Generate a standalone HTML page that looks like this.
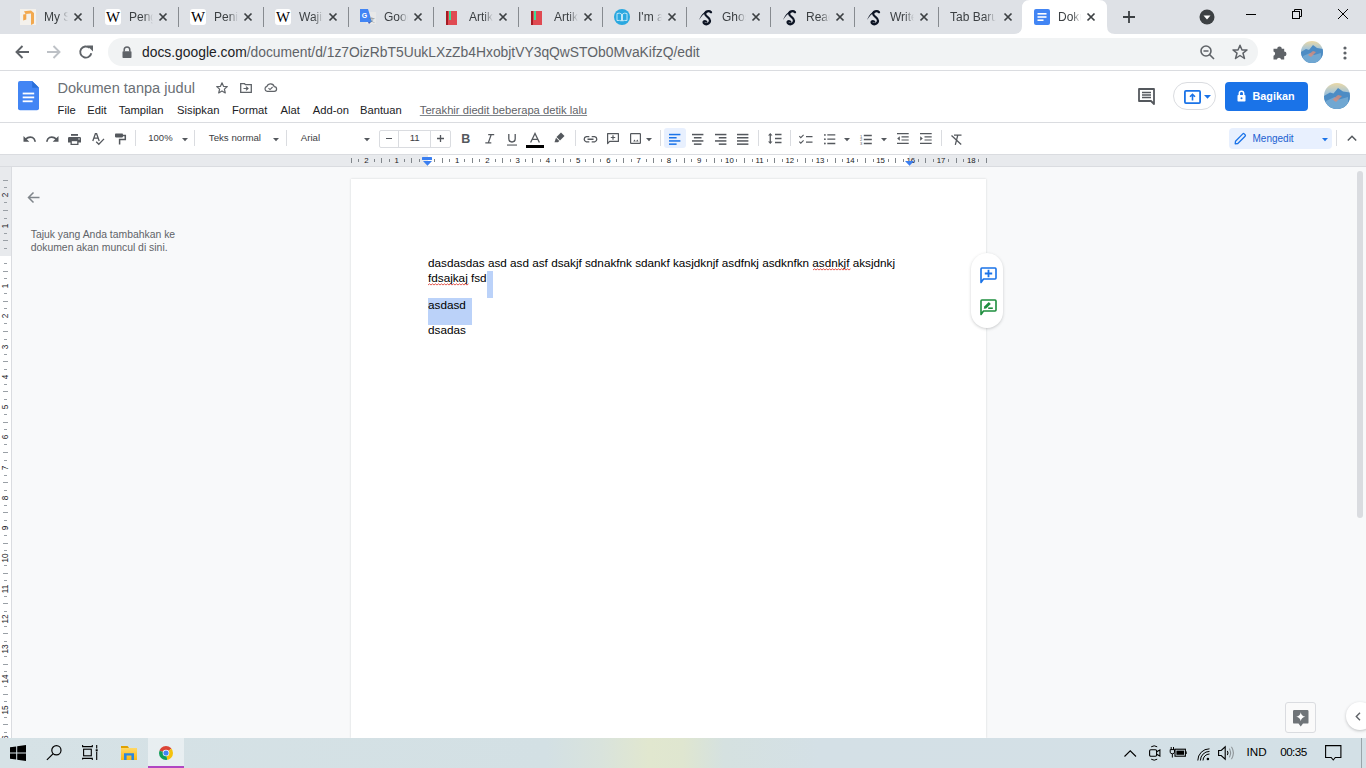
<!DOCTYPE html><html><head><meta charset="utf-8"><style>
*{margin:0;padding:0;box-sizing:border-box}
html,body{width:1366px;height:768px;overflow:hidden;background:#fff;font-family:"Liberation Sans",sans-serif}
.abs{position:absolute}
svg{position:absolute;overflow:visible}
.tt{position:absolute;top:10px;height:16px;font-size:12px;line-height:14px;color:#3c4043;white-space:nowrap;overflow:hidden;-webkit-mask-image:linear-gradient(90deg,#000 62%,transparent 100%)}
.sep{position:absolute;top:7px;width:1px;height:20px;background:#878b90}
.mi{position:absolute;top:103.9px;font-size:11.2px;color:#202124;white-space:nowrap}
.tb{position:absolute;top:132px;font-size:11px;color:#3c4043;white-space:nowrap}
.tsep{position:absolute;top:130px;width:1px;height:16px;background:#dadce0}
.rn{position:absolute;top:155px;font-size:9px;line-height:10px;color:#3c4043}
</style></head><body>
<div class="abs" style="left:0;top:0;width:1366px;height:34px;background:#dee1e6"></div>
<svg style="left:20px;top:9px" width="16" height="16"><rect x="0" y="0" width="16" height="16" fill="#f4f1ec"/><path d="M4 2.2L11 1.5L14 4V14.5L11 16V4.5L5.5 5Z" fill="#f2a950"/><path d="M3.2 5.5L6.3 5V10.5L3.2 11.5Z" fill="#f2a54a"/></svg>
<div class="tt" style="left:44px;width:24px">My S</div>
<svg style="left:74px;top:13px" width="8" height="8"><path d="M0.5 0.5L7.5 7.5M7.5 0.5L0.5 7.5" stroke="#3c4043" stroke-width="1.7"/></svg>
<div class="sep" style="left:93px"></div>
<svg style="left:105px;top:9px" width="16" height="16"><rect x="0" y="0" width="16" height="16" rx="3" fill="#fff"/><text x="8" y="12.5" font-family="Liberation Serif" font-size="14" text-anchor="middle" fill="#000" textLength="14" lengthAdjust="spacingAndGlyphs">W</text></svg>
<div class="tt" style="left:129px;width:24px">Penge</div>
<svg style="left:159px;top:13px" width="8" height="8"><path d="M0.5 0.5L7.5 7.5M7.5 0.5L0.5 7.5" stroke="#3c4043" stroke-width="1.7"/></svg>
<div class="sep" style="left:178px"></div>
<svg style="left:190px;top:9px" width="16" height="16"><rect x="0" y="0" width="16" height="16" rx="3" fill="#fff"/><text x="8" y="12.5" font-family="Liberation Serif" font-size="14" text-anchor="middle" fill="#000" textLength="14" lengthAdjust="spacingAndGlyphs">W</text></svg>
<div class="tt" style="left:214px;width:24px">Penil</div>
<svg style="left:244px;top:13px" width="8" height="8"><path d="M0.5 0.5L7.5 7.5M7.5 0.5L0.5 7.5" stroke="#3c4043" stroke-width="1.7"/></svg>
<div class="sep" style="left:263px"></div>
<svg style="left:275px;top:9px" width="16" height="16"><rect x="0" y="0" width="16" height="16" rx="3" fill="#fff"/><text x="8" y="12.5" font-family="Liberation Serif" font-size="14" text-anchor="middle" fill="#000" textLength="14" lengthAdjust="spacingAndGlyphs">W</text></svg>
<div class="tt" style="left:299px;width:24px">Wajib</div>
<svg style="left:329px;top:13px" width="8" height="8"><path d="M0.5 0.5L7.5 7.5M7.5 0.5L0.5 7.5" stroke="#3c4043" stroke-width="1.7"/></svg>
<div class="sep" style="left:348px"></div>
<svg style="left:360px;top:9px" width="16" height="16"><rect x="6" y="3" width="10" height="12" fill="#e8e8e8"/><path d="M0 0H8L12 13H0Z" fill="#4285f4"/><path d="M8 13L11 13L9 15Z" fill="#3a56c4"/><text x="4.5" y="9" font-family="Liberation Sans" font-weight="bold" font-size="7" text-anchor="middle" fill="#fff">G</text><text x="12" y="13" font-family="Liberation Sans" font-size="6" text-anchor="middle" fill="#888">文</text></svg>
<div class="tt" style="left:384px;width:24px">Goog</div>
<svg style="left:414px;top:13px" width="8" height="8"><path d="M0.5 0.5L7.5 7.5M7.5 0.5L0.5 7.5" stroke="#3c4043" stroke-width="1.7"/></svg>
<div class="sep" style="left:433px"></div>
<svg style="left:445px;top:9px" width="16" height="16"><rect x="1" y="2" width="11" height="14" fill="#e04a52"/><rect x="1" y="2" width="2" height="14" fill="#a51c24"/><rect x="4" y="2" width="2" height="9" fill="#3ddc97"/></svg>
<div class="tt" style="left:469px;width:24px">Artike</div>
<svg style="left:499px;top:13px" width="8" height="8"><path d="M0.5 0.5L7.5 7.5M7.5 0.5L0.5 7.5" stroke="#3c4043" stroke-width="1.7"/></svg>
<div class="sep" style="left:518px"></div>
<svg style="left:530px;top:9px" width="16" height="16"><rect x="1" y="2" width="11" height="14" fill="#e04a52"/><rect x="1" y="2" width="2" height="14" fill="#a51c24"/><rect x="4" y="2" width="2" height="9" fill="#3ddc97"/></svg>
<div class="tt" style="left:554px;width:24px">Artike</div>
<svg style="left:584px;top:13px" width="8" height="8"><path d="M0.5 0.5L7.5 7.5M7.5 0.5L0.5 7.5" stroke="#3c4043" stroke-width="1.7"/></svg>
<div class="sep" style="left:602px"></div>
<svg style="left:614px;top:9px" width="16" height="16"><circle cx="8" cy="8" r="8" fill="#2aa8e0"/><path d="M3 4.5Q5.5 3.5 7.5 5V12Q5.5 11 3 11.5Z M13 4.5Q10.5 3.5 8.5 5V12Q10.5 11 13 11.5Z" fill="none" stroke="#bfe6f7" stroke-width="1"/></svg>
<div class="tt" style="left:638px;width:24px">I'm a</div>
<svg style="left:668px;top:13px" width="8" height="8"><path d="M0.5 0.5L7.5 7.5M7.5 0.5L0.5 7.5" stroke="#3c4043" stroke-width="1.7"/></svg>
<div class="sep" style="left:686px"></div>
<svg style="left:698px;top:9px" width="16" height="16"><path d="M13 3.2C11 1.2 7 2.2 7.2 5C7.4 7.8 12.2 8.2 12 11.8C11.8 15 7.8 16.2 6 14.2C4.8 12.6 6.4 11.4 8.2 12.6" fill="none" stroke="#0d1424" stroke-width="2.3" stroke-linecap="round"/><path d="M1 11C3 6 6 2.5 10 1.8C12 1.5 13.8 1.8 13.6 3.6C12.5 2.6 10.5 2.6 8.5 3.4C5.5 4.8 3 7.5 1 11Z" fill="#0d1424"/></svg>
<div class="tt" style="left:722px;width:24px">Ghos</div>
<svg style="left:752px;top:13px" width="8" height="8"><path d="M0.5 0.5L7.5 7.5M7.5 0.5L0.5 7.5" stroke="#3c4043" stroke-width="1.7"/></svg>
<div class="sep" style="left:770px"></div>
<svg style="left:782px;top:9px" width="16" height="16"><path d="M13 3.2C11 1.2 7 2.2 7.2 5C7.4 7.8 12.2 8.2 12 11.8C11.8 15 7.8 16.2 6 14.2C4.8 12.6 6.4 11.4 8.2 12.6" fill="none" stroke="#0d1424" stroke-width="2.3" stroke-linecap="round"/><path d="M1 11C3 6 6 2.5 10 1.8C12 1.5 13.8 1.8 13.6 3.6C12.5 2.6 10.5 2.6 8.5 3.4C5.5 4.8 3 7.5 1 11Z" fill="#0d1424"/></svg>
<div class="tt" style="left:806px;width:24px">Read</div>
<svg style="left:836px;top:13px" width="8" height="8"><path d="M0.5 0.5L7.5 7.5M7.5 0.5L0.5 7.5" stroke="#3c4043" stroke-width="1.7"/></svg>
<div class="sep" style="left:854px"></div>
<svg style="left:866px;top:9px" width="16" height="16"><path d="M13 3.2C11 1.2 7 2.2 7.2 5C7.4 7.8 12.2 8.2 12 11.8C11.8 15 7.8 16.2 6 14.2C4.8 12.6 6.4 11.4 8.2 12.6" fill="none" stroke="#0d1424" stroke-width="2.3" stroke-linecap="round"/><path d="M1 11C3 6 6 2.5 10 1.8C12 1.5 13.8 1.8 13.6 3.6C12.5 2.6 10.5 2.6 8.5 3.4C5.5 4.8 3 7.5 1 11Z" fill="#0d1424"/></svg>
<div class="tt" style="left:890px;width:24px">Write</div>
<svg style="left:920px;top:13px" width="8" height="8"><path d="M0.5 0.5L7.5 7.5M7.5 0.5L0.5 7.5" stroke="#3c4043" stroke-width="1.7"/></svg>
<div class="sep" style="left:938px"></div>
<div class="tt" style="left:950px;width:46px;-webkit-mask-image:linear-gradient(90deg,#000 75%,transparent 100%)">Tab Baru</div>
<svg style="left:1004px;top:13px" width="8" height="8"><path d="M0.5 0.5L7.5 7.5M7.5 0.5L0.5 7.5" stroke="#3c4043" stroke-width="1.7"/></svg>
<svg style="left:1014px;top:0" width="101" height="34"><path d="M0 34Q8 34 8 26V8Q8 0 16 0H85Q93 0 93 8V26Q93 34 101 34Z" fill="#fff"/></svg>
<svg style="left:1034px;top:9px" width="16" height="16"><rect x="0" y="0" width="16" height="16" rx="2" fill="#4285f4"/><rect x="3.5" y="4" width="9" height="1.6" fill="#fff"/><rect x="3.5" y="7.2" width="9" height="1.6" fill="#fff"/><rect x="3.5" y="10.4" width="6" height="1.6" fill="#fff"/></svg>
<div class="tt" style="left:1058px;width:23px">Dokumen</div>
<svg style="left:1087px;top:13px" width="8" height="8"><path d="M0.5 0.5L7.5 7.5M7.5 0.5L0.5 7.5" stroke="#3c4043" stroke-width="1.7"/></svg>
<svg style="left:1123px;top:11px" width="12" height="12"><path d="M6 0V12M0 6H12" stroke="#3c4043" stroke-width="1.8"/></svg>
<svg style="left:1199px;top:9px" width="16" height="16"><circle cx="8" cy="8" r="7.5" fill="#3c4043"/><path d="M4.5 6.5H11.5L8 10.5Z" fill="#fff"/></svg>
<div class="abs" style="left:1246px;top:14px;width:10px;height:1px;background:#000"></div>
<svg style="left:1292px;top:9px" width="10" height="10"><rect x="0.5" y="2.5" width="7" height="7" fill="none" stroke="#000" stroke-width="1"/><path d="M2.5 2.5V0.5H9.5V7.5H7.5" fill="none" stroke="#000" stroke-width="1"/></svg>
<svg style="left:1338px;top:9px" width="10" height="10"><path d="M0 0L10 10M10 0L0 10" stroke="#000" stroke-width="1"/></svg>
<div class="abs" style="left:0;top:34px;width:1366px;height:36px;background:#fff"></div>
<div class="abs" style="left:0;top:70px;width:1366px;height:1px;background:#dadce0"></div>
<div class="abs" style="left:108px;top:38px;width:1150px;height:28px;border-radius:14px;background:#f1f3f4"></div>
<svg style="left:14px;top:44px" width="16" height="16"><path d="M15 8H2.5M8.5 2L2.5 8L8.5 14" fill="none" stroke="#5f6368" stroke-width="1.9"/></svg>
<svg style="left:46px;top:44px" width="16" height="16"><path d="M1 8H13.5M7.5 2L13.5 8L7.5 14" fill="none" stroke="#bdc1c6" stroke-width="1.9"/></svg>
<svg style="left:78px;top:44px" width="16" height="16"><path d="M13.3 9.2A5.6 5.6 0 1 1 11.6 3.9" fill="none" stroke="#5f6368" stroke-width="1.9"/><path d="M9 1.5H15V7.5Z" fill="#5f6368"/></svg>
<svg style="left:121px;top:46px" width="12" height="12"><path d="M3.2 5.5V3.8A2.8 2.8 0 0 1 8.8 3.8V5.5" fill="none" stroke="#5f6368" stroke-width="1.5"/><rect x="1.5" y="5.2" width="9" height="6.8" rx="0.8" fill="#5f6368"/></svg>
<div class="abs" style="left:142px;top:44px;font-size:13.85px;line-height:16px;color:#5f6368;white-space:nowrap"><span style="color:#202124">docs.google.com</span>/document/d/1z7OizRbT5UukLXzZb4HxobjtVY3qQwSTOb0MvaKifzQ/edit</div>
<svg style="left:1200px;top:45px" width="15" height="15"><circle cx="6" cy="6" r="5" fill="none" stroke="#5f6368" stroke-width="1.6"/><path d="M9.5 9.5L14 14M3.5 6H8.5" stroke="#5f6368" stroke-width="1.6"/></svg>
<svg style="left:1232px;top:44px" width="16" height="16"><path d="M8 1.2L10 6H15L11 9.2L12.5 14.5L8 11.5L3.5 14.5L5 9.2L1 6H6Z" fill="none" stroke="#5f6368" stroke-width="1.5" stroke-linejoin="round"/></svg>
<svg style="left:1273px;top:44.5px" width="15" height="15"><path d="M0.5 3.8H4.2A2.3 2.3 0 0 1 8.8 3.8H11.2V6.6A2.3 2.3 0 0 1 11.2 11.2V14.5H8.2A2.3 2.3 0 0 0 3.8 14.5H0.5V10.8A2.3 2.3 0 0 0 0.5 6.4Z" fill="#5f6368"/></svg>
<svg style="left:1301px;top:41px" width="22" height="22"><defs><linearGradient id="av1" x1="0" y1="0" x2="0" y2="1"><stop offset="0" stop-color="#ecd9a6"/><stop offset="0.35" stop-color="#a9c6d6"/><stop offset="1" stop-color="#4f88b8"/></linearGradient><clipPath id="avc1"><circle cx="11" cy="11" r="11"/></clipPath></defs><g clip-path="url(#avc1)"><rect width="22" height="22" fill="url(#av1)"/><path d="M0 11L5 8L8 9L12 4L16 7L22 8V22H0Z" fill="#4d8cc4"/><path d="M2 15L9 12L13 14L20 12V22H2Z" fill="#7fb2d9" opacity="0.7"/><path d="M7 14L12 10L15 11L10 16Z" fill="#d88c7a" opacity="0.8"/></g></svg>
<svg style="left:1342.5px;top:45.5px" width="4" height="14"><circle cx="2" cy="2" r="1.6" fill="#5f6368"/><circle cx="2" cy="7" r="1.6" fill="#5f6368"/><circle cx="2" cy="12" r="1.6" fill="#5f6368"/></svg>
<svg style="left:18.3px;top:81.3px" width="21" height="29.3"><path d="M2 0H14.2L21 6.8V27.3A2 2 0 0 1 19 29.3H2A2 2 0 0 1 0 27.3V2A2 2 0 0 1 2 0Z" fill="#4285f4"/><path d="M14.2 0V6.8H21Z" fill="#2a6fd9"/><rect x="4.7" y="11.6" width="11.5" height="1.8" fill="#fff"/><rect x="4.7" y="15.5" width="11.5" height="1.8" fill="#fff"/><rect x="4.7" y="19.4" width="9.9" height="1.8" fill="#fff"/></svg>
<div class="abs" style="left:57.5px;top:79px;font-size:14.55px;line-height:18px;color:#6b7075;white-space:nowrap">Dokumen tanpa judul</div>
<svg style="left:216px;top:81.5px" width="12" height="12"><path d="M6 0.8L7.5 4.3L11.3 4.6L8.4 7.1L9.3 10.9L6 8.9L2.7 10.9L3.6 7.1L0.7 4.6L4.5 4.3Z" fill="none" stroke="#5f6368" stroke-width="1.2" stroke-linejoin="round"/></svg>
<svg style="left:240px;top:83px" width="12" height="10"><path d="M0.7 0.7H4.5L5.5 1.7H11.3V9.3H0.7Z" fill="none" stroke="#5f6368" stroke-width="1.3"/><path d="M3.5 5.5H7.8M6 3.6L8 5.5L6 7.4" fill="none" stroke="#5f6368" stroke-width="1.2"/></svg>
<svg style="left:264px;top:83px" width="13" height="9"><path d="M3.2 8.4A2.6 2.6 0 0 1 3 3.3A3.8 3.8 0 0 1 10.2 3.6A2.4 2.4 0 0 1 10.2 8.4Z" fill="none" stroke="#5f6368" stroke-width="1.2"/><path d="M4.5 5.2L6 6.6L8.6 4" fill="none" stroke="#5f6368" stroke-width="1.1"/></svg>
<div class="mi" style="left:57.6px">File</div>
<div class="mi" style="left:87.3px">Edit</div>
<div class="mi" style="left:118.7px">Tampilan</div>
<div class="mi" style="left:177.1px">Sisipkan</div>
<div class="mi" style="left:232px">Format</div>
<div class="mi" style="left:280.6px">Alat</div>
<div class="mi" style="left:312.8px">Add-on</div>
<div class="mi" style="left:360px">Bantuan</div>
<div class="mi" style="left:419.8px;color:#5f6368;text-decoration:underline;text-decoration-color:#80868b">Terakhir diedit beberapa detik lalu</div>
<svg style="left:1138px;top:88px" width="17" height="16"><path d="M1 1H16V16L13 13H1Z" fill="none" stroke="#54585d" stroke-width="1.8" stroke-linejoin="round"/><path d="M4 4.5H13M4 7H13M4 9.5H13" stroke="#54585d" stroke-width="1.4"/></svg>
<div class="abs" style="left:1173px;top:82px;width:43px;height:28px;border:1px solid #dadce0;border-radius:14px;background:#fff"></div>
<svg style="left:1184px;top:89.5px" width="17" height="14"><rect x="0.9" y="0.9" width="15.2" height="12.2" rx="1" fill="none" stroke="#1a73e8" stroke-width="1.8"/><path d="M8.5 10.5V4.5M6 6.8L8.5 4.3L11 6.8" fill="none" stroke="#1a73e8" stroke-width="1.6"/></svg>
<svg style="left:1204px;top:95px" width="7" height="4"><path d="M0 0H7L3.5 3.8Z" fill="#1a73e8"/></svg>
<div class="abs" style="left:1225px;top:82px;width:83px;height:29px;border-radius:4px;background:#1a73e8"></div>
<svg style="left:1237px;top:90px" width="9" height="12"><path d="M2.3 5V3.5A2.2 2.2 0 0 1 6.7 3.5V5" fill="none" stroke="#fff" stroke-width="1.5"/><rect x="0.5" y="5" width="8" height="6.5" rx="0.7" fill="#fff"/><circle cx="4.5" cy="8.2" r="1" fill="#1a73e8"/></svg>
<div class="abs" style="left:1252.5px;top:89px;font-size:10.8px;line-height:14px;font-weight:bold;color:#fff;white-space:nowrap">Bagikan</div>
<svg style="left:1324px;top:83px" width="26" height="26"><defs><linearGradient id="av2" x1="0" y1="0" x2="0" y2="1"><stop offset="0" stop-color="#ecd9a6"/><stop offset="0.35" stop-color="#a9c6d6"/><stop offset="1" stop-color="#4f88b8"/></linearGradient><clipPath id="avc2"><circle cx="13" cy="13" r="13"/></clipPath></defs><g clip-path="url(#avc2)"><rect width="26" height="26" fill="url(#av2)"/><path d="M0 13L6 9.5L9.5 10.5L14 5L19 8.5L26 9.5V26H0Z" fill="#4d8cc4"/><path d="M2 18L10.5 14L15 16.5L24 14V26H2Z" fill="#7fb2d9" opacity="0.7"/><path d="M8.5 16.5L14 12L18 13L12 19Z" fill="#d88c7a" opacity="0.8"/></g></svg>
<svg style="left:22.5px;top:135px" width="13" height="8"><path d="M2.5 4.2Q6 1.2 9.5 2.6Q11.5 3.5 12.3 6.8" fill="none" stroke="#54585d" stroke-width="1.6"/><path d="M0.5 1V6.8H6.3Z" fill="#54585d"/></svg>
<svg style="left:46px;top:135px" width="13" height="8"><path d="M10.5 4.2Q7 1.2 3.5 2.6Q1.5 3.5 0.7 6.8" fill="none" stroke="#54585d" stroke-width="1.6"/><path d="M12.5 1V6.8H6.7Z" fill="#54585d"/></svg>
<svg style="left:68px;top:134px" width="13" height="11"><rect x="3" y="0" width="7" height="1.8" fill="#54585d"/><path d="M1.2 3H11.8A1.2 1.2 0 0 1 13 4.2V8.5H10.5V11H2.5V8.5H0V4.2A1.2 1.2 0 0 1 1.2 3Z" fill="#54585d"/><rect x="3.8" y="7.2" width="5.4" height="2.6" fill="#fff"/><circle cx="11" cy="5" r="0.7" fill="#fff"/></svg>
<svg style="left:91.5px;top:133px" width="13" height="12"><path d="M0.8 8L3.4 0.7H4.6L7.2 8M2 5.2H6" fill="none" stroke="#54585d" stroke-width="1.3"/><path d="M4.2 8.8L6.8 11.3L12 5.9" fill="none" stroke="#54585d" stroke-width="1.3"/></svg>
<svg style="left:115px;top:133px" width="11" height="12"><rect x="0" y="0.6" width="8" height="3.8" rx="0.8" fill="#54585d"/><path d="M8 2.4H10.3V6.4H4.6V11.5" fill="none" stroke="#54585d" stroke-width="1.5"/></svg>
<div class="tsep" style="left:135px"></div>
<div class="tsep" style="left:194px"></div>
<div class="tsep" style="left:286px"></div>
<div class="tsep" style="left:575px"></div>
<div class="tsep" style="left:660px"></div>
<div class="tsep" style="left:758px"></div>
<div class="tsep" style="left:790px"></div>
<div class="tsep" style="left:941px"></div>
<div class="tsep" style="left:1336px"></div>
<div class="tb" style="left:148.3px;top:131.5px;font-size:9.5px">100%</div>
<svg style="left:181.7px;top:137.5px" width="6" height="3.5"><path d="M0 0H6L3 3.3Z" fill="#54585d"/></svg>
<svg style="left:272.8px;top:137.5px" width="6" height="3.5"><path d="M0 0H6L3 3.3Z" fill="#54585d"/></svg>
<svg style="left:364.4px;top:137.5px" width="6" height="3.5"><path d="M0 0H6L3 3.3Z" fill="#54585d"/></svg>
<div class="tb" style="left:208.8px;top:131.5px;font-size:9.7px">Teks normal</div>
<div class="tb" style="left:300.7px;top:131.5px;font-size:9.7px">Arial</div>
<div class="abs" style="left:379px;top:129.5px;width:72px;height:18px;border:1px solid #dadce0;border-radius:2px"></div>
<div class="abs" style="left:398px;top:129.5px;width:1px;height:18px;background:#dadce0"></div>
<div class="abs" style="left:430px;top:129.5px;width:1px;height:18px;background:#dadce0"></div>
<div class="abs" style="left:385.5px;top:137.5px;width:6.5px;height:1.3px;background:#54585d"></div>
<div class="tb" style="left:409.7px;top:131.8px;font-size:9.7px">11</div>
<svg style="left:437px;top:135px" width="7" height="7"><path d="M3.5 0V7M0 3.5H7" stroke="#54585d" stroke-width="1.3"/></svg>
<div class="abs" style="left:461.3px;top:131.5px;font-size:12.5px;line-height:14px;font-weight:bold;color:#54585d">B</div>
<svg style="left:484.5px;top:134px" width="9.5" height="9.5"><path d="M3.2 0.6H9.2M0.3 8.9H6.3M6.2 0.6L3.3 8.9" fill="none" stroke="#54585d" stroke-width="1.3"/></svg>
<svg style="left:506.5px;top:134px" width="10" height="12"><path d="M1.8 0V4.8A3.2 3.2 0 0 0 8.2 4.8V0" fill="none" stroke="#54585d" stroke-width="1.3"/><rect x="0" y="10.5" width="10" height="1.1" fill="#54585d"/></svg>
<svg style="left:530px;top:133.3px" width="10" height="10"><path d="M0.6 9.5L5 0.5L9.4 9.5M2.2 6.4H7.8" fill="none" stroke="#54585d" stroke-width="1.3"/></svg>
<div class="abs" style="left:526px;top:145px;width:18px;height:3px;background:#000"></div>
<svg style="left:554px;top:132px" width="11" height="10.5"><path d="M7 0.5L10.5 4L6 8.5L2.5 5Z" fill="#54585d"/><path d="M2 5.7L5.3 9L4 10.3H0.5Z" fill="#54585d"/></svg>
<svg style="left:583px;top:135.7px" width="15" height="6.5"><path d="M6.3 0.7H3.3A2.6 2.6 0 0 0 3.3 5.8H6.3M8.7 0.7H11.7A2.6 2.6 0 0 1 11.7 5.8H8.7M4.5 3.25H10.5" fill="none" stroke="#54585d" stroke-width="1.3"/></svg>
<svg style="left:607px;top:133px" width="12" height="11"><path d="M0.6 10.5V0.6H11.4V8.4H2.6Z" fill="none" stroke="#54585d" stroke-width="1.2" stroke-linejoin="round"/><path d="M6 2.3V6.7M3.8 4.5H8.2" stroke="#54585d" stroke-width="1.2"/></svg>
<svg style="left:630px;top:133px" width="11" height="11"><rect x="0.6" y="0.6" width="9.8" height="9.8" rx="0.6" fill="none" stroke="#54585d" stroke-width="1.2"/><path d="M3.2 8.4L4.5 6.5L5.8 8.4ZM6 8.4L7.3 6.5L8.6 8.4Z" fill="#54585d"/></svg>
<svg style="left:646px;top:137.8px" width="6" height="3.5"><path d="M0 0H6L3 3.3Z" fill="#54585d"/></svg>
<div class="abs" style="left:664px;top:128.3px;width:22px;height:20px;border-radius:3px;background:#e8f0fe"></div>
<svg style="left:669.2px;top:133px" width="12" height="12"><rect x="0" y="0.8000000000000114" width="11.4" height="1.5" fill="#1a73e8"/><rect x="0" y="4" width="7.6" height="1.5" fill="#1a73e8"/><rect x="0" y="7.199999999999989" width="11.4" height="1.5" fill="#1a73e8"/><rect x="0" y="10.400000000000006" width="7.6" height="1.5" fill="#1a73e8"/></svg>
<svg style="left:692.4px;top:133px" width="12" height="12"><rect x="0" y="0.8000000000000114" width="11.4" height="1.5" fill="#54585d"/><rect x="1.9" y="4" width="7.6" height="1.5" fill="#54585d"/><rect x="0" y="7.199999999999989" width="11.4" height="1.5" fill="#54585d"/><rect x="1.9" y="10.400000000000006" width="7.6" height="1.5" fill="#54585d"/></svg>
<svg style="left:715.3px;top:133px" width="12" height="12"><rect x="0" y="0.8000000000000114" width="11.4" height="1.5" fill="#54585d"/><rect x="3.8" y="4" width="7.6" height="1.5" fill="#54585d"/><rect x="0" y="7.199999999999989" width="11.4" height="1.5" fill="#54585d"/><rect x="3.8" y="10.400000000000006" width="7.6" height="1.5" fill="#54585d"/></svg>
<svg style="left:737.3px;top:133px" width="12" height="12"><rect x="0" y="0.8000000000000114" width="11.4" height="1.5" fill="#54585d"/><rect x="0" y="4" width="11.4" height="1.5" fill="#54585d"/><rect x="0" y="7.199999999999989" width="11.4" height="1.5" fill="#54585d"/><rect x="0" y="10.400000000000006" width="11.4" height="1.5" fill="#54585d"/></svg>
<svg style="left:767.5px;top:133px" width="14" height="11"><path d="M2.25 1.8V9.2" stroke="#54585d" stroke-width="1.3"/><path d="M0 2.6L2.25 0L4.5 2.6ZM0 8.4L2.25 11L4.5 8.4Z" fill="#54585d"/><path d="M7 1.5H13.5M7 5.5H13.5M7 9.5H13.5" stroke="#54585d" stroke-width="1.3"/></svg>
<svg style="left:798.5px;top:133.5px" width="14" height="11"><path d="M0.3 2.2L1.8 3.7L4.6 0.9M0.3 7.7L1.8 9.2L4.6 6.4" fill="none" stroke="#54585d" stroke-width="1.1"/><path d="M7 2.6H13.5M7 8.1H13.5" stroke="#54585d" stroke-width="1.3"/></svg>
<svg style="left:823.5px;top:134px" width="11.5" height="10.5"><circle cx="0.9" cy="0.9" r="0.9" fill="#54585d"/><circle cx="0.9" cy="5.2" r="0.9" fill="#54585d"/><circle cx="0.9" cy="9.5" r="0.9" fill="#54585d"/><path d="M3.3 0.9H11.3M3.3 5.2H11.3M3.3 9.5H11.3" stroke="#54585d" stroke-width="1.3"/></svg>
<svg style="left:844px;top:137.5px" width="6" height="3.5"><path d="M0 0H6L3 3.3Z" fill="#54585d"/></svg>
<svg style="left:860px;top:133.5px" width="12" height="11"><text x="0" y="3.6" font-size="4" font-family="Liberation Sans" fill="#54585d">1</text><text x="0" y="7.3" font-size="4" font-family="Liberation Sans" fill="#54585d">2</text><text x="0" y="11" font-size="4" font-family="Liberation Sans" fill="#54585d">3</text><path d="M3.8 1.5H11.8M3.8 5.5H11.8M3.8 9.5H11.8" stroke="#54585d" stroke-width="1.3"/></svg>
<svg style="left:881.2px;top:137.5px" width="6" height="3.5"><path d="M0 0H6L3 3.3Z" fill="#54585d"/></svg>
<svg style="left:897px;top:133.3px" width="12" height="11"><path d="M0 0.6H11.7M4.5 3.9H11.7M4.5 7H11.7M0 10.3H11.7" stroke="#54585d" stroke-width="1.2"/><path d="M2.8 3.2V7.8L0.2 5.5Z" fill="#54585d"/></svg>
<svg style="left:920px;top:133.3px" width="12" height="11"><path d="M0 0.6H11.7M4.5 3.9H11.7M4.5 7H11.7M0 10.3H11.7" stroke="#54585d" stroke-width="1.2"/><path d="M0.2 3.2V7.8L2.8 5.5Z" fill="#54585d"/></svg>
<svg style="left:951px;top:134px" width="11" height="11"><path d="M3 1.2H10.5M6.8 1.2L4.3 10.8M0.5 1.5L10.2 10.5" fill="none" stroke="#54585d" stroke-width="1.3"/></svg>
<div class="abs" style="left:1229px;top:128.3px;width:103px;height:20.5px;border-radius:4px;background:#e8f0fe"></div>
<svg style="left:1234px;top:132.5px" width="12" height="12"><path d="M1.2 10.8L1.5 8.2L8.8 0.9A1 1 0 0 1 10.2 0.9L11.1 1.8A1 1 0 0 1 11.1 3.2L3.8 10.5Z" fill="none" stroke="#1a73e8" stroke-width="1.3" stroke-linejoin="round"/></svg>
<div class="abs" style="left:1252.5px;top:132.5px;font-size:10px;line-height:12px;color:#1a5fd1;white-space:nowrap">Mengedit</div>
<svg style="left:1322px;top:137.5px" width="6" height="3.5"><path d="M0 0H6L3 3.3Z" fill="#1a73e8"/></svg>
<svg style="left:1347px;top:135px" width="10" height="6"><path d="M0.8 5.5L5 1.3L9.2 5.5" fill="none" stroke="#54585d" stroke-width="1.5"/></svg>
<div class="abs" style="left:0;top:122px;width:1366px;height:1px;background:#dadce0"></div>
<div class="abs" style="left:0;top:154px;width:1366px;height:1px;background:#dadce0"></div>
<div class="abs" style="left:0;top:155px;width:1366px;height:11px;background:#e8eaed"></div>
<div class="abs" style="left:427.6px;top:155px;width:481.5px;height:11px;background:#fff"></div>
<div class="abs" style="left:0;top:166px;width:1366px;height:1px;background:#dadce0"></div>
<div class="abs" style="left:350.90px;top:158.2px;width:1px;height:4.6px;background:#80868b"></div>
<div class="abs" style="left:358.46px;top:159px;width:1px;height:3px;background:#80868b"></div>
<div class="abs" style="left:356.52px;top:155.5px;width:20px;text-align:center;font-size:7.8px;line-height:10px;color:#202124">2</div>
<div class="abs" style="left:373.58px;top:159px;width:1px;height:3px;background:#80868b"></div>
<div class="abs" style="left:381.14px;top:158.2px;width:1px;height:4.6px;background:#80868b"></div>
<div class="abs" style="left:388.70px;top:159px;width:1px;height:3px;background:#80868b"></div>
<div class="abs" style="left:386.76px;top:155.5px;width:20px;text-align:center;font-size:7.8px;line-height:10px;color:#202124">1</div>
<div class="abs" style="left:403.82px;top:159px;width:1px;height:3px;background:#80868b"></div>
<div class="abs" style="left:411.38px;top:158.2px;width:1px;height:4.6px;background:#80868b"></div>
<div class="abs" style="left:418.94px;top:159px;width:1px;height:3px;background:#80868b"></div>
<div class="abs" style="left:434.06px;top:159px;width:1px;height:3px;background:#80868b"></div>
<div class="abs" style="left:441.62px;top:158.2px;width:1px;height:4.6px;background:#80868b"></div>
<div class="abs" style="left:449.18px;top:159px;width:1px;height:3px;background:#80868b"></div>
<div class="abs" style="left:447.24px;top:155.5px;width:20px;text-align:center;font-size:7.8px;line-height:10px;color:#202124">1</div>
<div class="abs" style="left:464.30px;top:159px;width:1px;height:3px;background:#80868b"></div>
<div class="abs" style="left:471.86px;top:158.2px;width:1px;height:4.6px;background:#80868b"></div>
<div class="abs" style="left:479.42px;top:159px;width:1px;height:3px;background:#80868b"></div>
<div class="abs" style="left:477.48px;top:155.5px;width:20px;text-align:center;font-size:7.8px;line-height:10px;color:#202124">2</div>
<div class="abs" style="left:494.54px;top:159px;width:1px;height:3px;background:#80868b"></div>
<div class="abs" style="left:502.10px;top:158.2px;width:1px;height:4.6px;background:#80868b"></div>
<div class="abs" style="left:509.66px;top:159px;width:1px;height:3px;background:#80868b"></div>
<div class="abs" style="left:507.72px;top:155.5px;width:20px;text-align:center;font-size:7.8px;line-height:10px;color:#202124">3</div>
<div class="abs" style="left:524.78px;top:159px;width:1px;height:3px;background:#80868b"></div>
<div class="abs" style="left:532.34px;top:158.2px;width:1px;height:4.6px;background:#80868b"></div>
<div class="abs" style="left:539.90px;top:159px;width:1px;height:3px;background:#80868b"></div>
<div class="abs" style="left:537.96px;top:155.5px;width:20px;text-align:center;font-size:7.8px;line-height:10px;color:#202124">4</div>
<div class="abs" style="left:555.02px;top:159px;width:1px;height:3px;background:#80868b"></div>
<div class="abs" style="left:562.58px;top:158.2px;width:1px;height:4.6px;background:#80868b"></div>
<div class="abs" style="left:570.14px;top:159px;width:1px;height:3px;background:#80868b"></div>
<div class="abs" style="left:568.20px;top:155.5px;width:20px;text-align:center;font-size:7.8px;line-height:10px;color:#202124">5</div>
<div class="abs" style="left:585.26px;top:159px;width:1px;height:3px;background:#80868b"></div>
<div class="abs" style="left:592.82px;top:158.2px;width:1px;height:4.6px;background:#80868b"></div>
<div class="abs" style="left:600.38px;top:159px;width:1px;height:3px;background:#80868b"></div>
<div class="abs" style="left:598.44px;top:155.5px;width:20px;text-align:center;font-size:7.8px;line-height:10px;color:#202124">6</div>
<div class="abs" style="left:615.50px;top:159px;width:1px;height:3px;background:#80868b"></div>
<div class="abs" style="left:623.06px;top:158.2px;width:1px;height:4.6px;background:#80868b"></div>
<div class="abs" style="left:630.62px;top:159px;width:1px;height:3px;background:#80868b"></div>
<div class="abs" style="left:628.68px;top:155.5px;width:20px;text-align:center;font-size:7.8px;line-height:10px;color:#202124">7</div>
<div class="abs" style="left:645.74px;top:159px;width:1px;height:3px;background:#80868b"></div>
<div class="abs" style="left:653.30px;top:158.2px;width:1px;height:4.6px;background:#80868b"></div>
<div class="abs" style="left:660.86px;top:159px;width:1px;height:3px;background:#80868b"></div>
<div class="abs" style="left:658.92px;top:155.5px;width:20px;text-align:center;font-size:7.8px;line-height:10px;color:#202124">8</div>
<div class="abs" style="left:675.98px;top:159px;width:1px;height:3px;background:#80868b"></div>
<div class="abs" style="left:683.54px;top:158.2px;width:1px;height:4.6px;background:#80868b"></div>
<div class="abs" style="left:691.10px;top:159px;width:1px;height:3px;background:#80868b"></div>
<div class="abs" style="left:689.16px;top:155.5px;width:20px;text-align:center;font-size:7.8px;line-height:10px;color:#202124">9</div>
<div class="abs" style="left:706.22px;top:159px;width:1px;height:3px;background:#80868b"></div>
<div class="abs" style="left:713.78px;top:158.2px;width:1px;height:4.6px;background:#80868b"></div>
<div class="abs" style="left:721.34px;top:159px;width:1px;height:3px;background:#80868b"></div>
<div class="abs" style="left:719.40px;top:155.5px;width:20px;text-align:center;font-size:7.8px;line-height:10px;color:#202124">10</div>
<div class="abs" style="left:736.46px;top:159px;width:1px;height:3px;background:#80868b"></div>
<div class="abs" style="left:744.02px;top:158.2px;width:1px;height:4.6px;background:#80868b"></div>
<div class="abs" style="left:751.58px;top:159px;width:1px;height:3px;background:#80868b"></div>
<div class="abs" style="left:749.64px;top:155.5px;width:20px;text-align:center;font-size:7.8px;line-height:10px;color:#202124">11</div>
<div class="abs" style="left:766.70px;top:159px;width:1px;height:3px;background:#80868b"></div>
<div class="abs" style="left:774.26px;top:158.2px;width:1px;height:4.6px;background:#80868b"></div>
<div class="abs" style="left:781.82px;top:159px;width:1px;height:3px;background:#80868b"></div>
<div class="abs" style="left:779.88px;top:155.5px;width:20px;text-align:center;font-size:7.8px;line-height:10px;color:#202124">12</div>
<div class="abs" style="left:796.94px;top:159px;width:1px;height:3px;background:#80868b"></div>
<div class="abs" style="left:804.50px;top:158.2px;width:1px;height:4.6px;background:#80868b"></div>
<div class="abs" style="left:812.06px;top:159px;width:1px;height:3px;background:#80868b"></div>
<div class="abs" style="left:810.12px;top:155.5px;width:20px;text-align:center;font-size:7.8px;line-height:10px;color:#202124">13</div>
<div class="abs" style="left:827.18px;top:159px;width:1px;height:3px;background:#80868b"></div>
<div class="abs" style="left:834.74px;top:158.2px;width:1px;height:4.6px;background:#80868b"></div>
<div class="abs" style="left:842.30px;top:159px;width:1px;height:3px;background:#80868b"></div>
<div class="abs" style="left:840.36px;top:155.5px;width:20px;text-align:center;font-size:7.8px;line-height:10px;color:#202124">14</div>
<div class="abs" style="left:857.42px;top:159px;width:1px;height:3px;background:#80868b"></div>
<div class="abs" style="left:864.98px;top:158.2px;width:1px;height:4.6px;background:#80868b"></div>
<div class="abs" style="left:872.54px;top:159px;width:1px;height:3px;background:#80868b"></div>
<div class="abs" style="left:870.60px;top:155.5px;width:20px;text-align:center;font-size:7.8px;line-height:10px;color:#202124">15</div>
<div class="abs" style="left:887.66px;top:159px;width:1px;height:3px;background:#80868b"></div>
<div class="abs" style="left:895.22px;top:158.2px;width:1px;height:4.6px;background:#80868b"></div>
<div class="abs" style="left:902.78px;top:159px;width:1px;height:3px;background:#80868b"></div>
<div class="abs" style="left:900.84px;top:155.5px;width:20px;text-align:center;font-size:7.8px;line-height:10px;color:#202124">16</div>
<div class="abs" style="left:917.90px;top:159px;width:1px;height:3px;background:#80868b"></div>
<div class="abs" style="left:925.46px;top:158.2px;width:1px;height:4.6px;background:#80868b"></div>
<div class="abs" style="left:933.02px;top:159px;width:1px;height:3px;background:#80868b"></div>
<div class="abs" style="left:931.08px;top:155.5px;width:20px;text-align:center;font-size:7.8px;line-height:10px;color:#202124">17</div>
<div class="abs" style="left:948.14px;top:159px;width:1px;height:3px;background:#80868b"></div>
<div class="abs" style="left:955.70px;top:158.2px;width:1px;height:4.6px;background:#80868b"></div>
<div class="abs" style="left:963.26px;top:159px;width:1px;height:3px;background:#80868b"></div>
<div class="abs" style="left:961.32px;top:155.5px;width:20px;text-align:center;font-size:7.8px;line-height:10px;color:#202124">18</div>
<div class="abs" style="left:978.38px;top:159px;width:1px;height:3px;background:#80868b"></div>
<div class="abs" style="left:985.94px;top:158.2px;width:1px;height:4.6px;background:#80868b"></div>
<div class="abs" style="left:422px;top:157px;width:10px;height:3px;border-radius:0.5px;background:#3b7ff0"></div>
<svg style="left:422.8px;top:161px" width="9" height="5"><path d="M0 0H9L4.5 4.8Z" fill="#3b7ff0"/></svg>
<svg style="left:904.8px;top:161px" width="9" height="5"><path d="M0 0H9L4.5 4.8Z" fill="#3b7ff0"/></svg>
<div class="abs" style="left:0;top:167px;width:1366px;height:571px;background:#f8f9fa"></div>
<div class="abs" style="left:0;top:167px;width:11px;height:571px;background:#fff"></div>
<div class="abs" style="left:0;top:167px;width:11px;height:89px;background:#e8eaed"></div>
<div class="abs" style="left:11px;top:167px;width:1px;height:571px;background:#dadce0"></div>
<div class="abs" style="left:3px;top:179.80px;width:5px;height:1px;background:#9aa0a6"></div>
<div class="abs" style="left:4px;top:187.36px;width:3px;height:1px;background:#9aa0a6"></div>
<div class="abs" style="left:-3.8px;top:190.42px;width:20px;height:10px;text-align:center;font-size:8.2px;line-height:10px;color:#202124;transform:rotate(-90deg)">2</div>
<div class="abs" style="left:4px;top:202.48px;width:3px;height:1px;background:#9aa0a6"></div>
<div class="abs" style="left:3px;top:210.04px;width:5px;height:1px;background:#9aa0a6"></div>
<div class="abs" style="left:4px;top:217.60px;width:3px;height:1px;background:#9aa0a6"></div>
<div class="abs" style="left:-3.8px;top:220.66px;width:20px;height:10px;text-align:center;font-size:8.2px;line-height:10px;color:#202124;transform:rotate(-90deg)">1</div>
<div class="abs" style="left:4px;top:232.72px;width:3px;height:1px;background:#9aa0a6"></div>
<div class="abs" style="left:3px;top:240.28px;width:5px;height:1px;background:#9aa0a6"></div>
<div class="abs" style="left:4px;top:247.84px;width:3px;height:1px;background:#9aa0a6"></div>
<div class="abs" style="left:4px;top:262.96px;width:3px;height:1px;background:#9aa0a6"></div>
<div class="abs" style="left:3px;top:270.52px;width:5px;height:1px;background:#9aa0a6"></div>
<div class="abs" style="left:4px;top:278.08px;width:3px;height:1px;background:#9aa0a6"></div>
<div class="abs" style="left:-3.8px;top:281.14px;width:20px;height:10px;text-align:center;font-size:8.2px;line-height:10px;color:#202124;transform:rotate(-90deg)">1</div>
<div class="abs" style="left:4px;top:293.20px;width:3px;height:1px;background:#9aa0a6"></div>
<div class="abs" style="left:3px;top:300.76px;width:5px;height:1px;background:#9aa0a6"></div>
<div class="abs" style="left:4px;top:308.32px;width:3px;height:1px;background:#9aa0a6"></div>
<div class="abs" style="left:-3.8px;top:311.38px;width:20px;height:10px;text-align:center;font-size:8.2px;line-height:10px;color:#202124;transform:rotate(-90deg)">2</div>
<div class="abs" style="left:4px;top:323.44px;width:3px;height:1px;background:#9aa0a6"></div>
<div class="abs" style="left:3px;top:331.00px;width:5px;height:1px;background:#9aa0a6"></div>
<div class="abs" style="left:4px;top:338.56px;width:3px;height:1px;background:#9aa0a6"></div>
<div class="abs" style="left:-3.8px;top:341.62px;width:20px;height:10px;text-align:center;font-size:8.2px;line-height:10px;color:#202124;transform:rotate(-90deg)">3</div>
<div class="abs" style="left:4px;top:353.68px;width:3px;height:1px;background:#9aa0a6"></div>
<div class="abs" style="left:3px;top:361.24px;width:5px;height:1px;background:#9aa0a6"></div>
<div class="abs" style="left:4px;top:368.80px;width:3px;height:1px;background:#9aa0a6"></div>
<div class="abs" style="left:-3.8px;top:371.86px;width:20px;height:10px;text-align:center;font-size:8.2px;line-height:10px;color:#202124;transform:rotate(-90deg)">4</div>
<div class="abs" style="left:4px;top:383.92px;width:3px;height:1px;background:#9aa0a6"></div>
<div class="abs" style="left:3px;top:391.48px;width:5px;height:1px;background:#9aa0a6"></div>
<div class="abs" style="left:4px;top:399.04px;width:3px;height:1px;background:#9aa0a6"></div>
<div class="abs" style="left:-3.8px;top:402.10px;width:20px;height:10px;text-align:center;font-size:8.2px;line-height:10px;color:#202124;transform:rotate(-90deg)">5</div>
<div class="abs" style="left:4px;top:414.16px;width:3px;height:1px;background:#9aa0a6"></div>
<div class="abs" style="left:3px;top:421.72px;width:5px;height:1px;background:#9aa0a6"></div>
<div class="abs" style="left:4px;top:429.28px;width:3px;height:1px;background:#9aa0a6"></div>
<div class="abs" style="left:-3.8px;top:432.34px;width:20px;height:10px;text-align:center;font-size:8.2px;line-height:10px;color:#202124;transform:rotate(-90deg)">6</div>
<div class="abs" style="left:4px;top:444.40px;width:3px;height:1px;background:#9aa0a6"></div>
<div class="abs" style="left:3px;top:451.96px;width:5px;height:1px;background:#9aa0a6"></div>
<div class="abs" style="left:4px;top:459.52px;width:3px;height:1px;background:#9aa0a6"></div>
<div class="abs" style="left:-3.8px;top:462.58px;width:20px;height:10px;text-align:center;font-size:8.2px;line-height:10px;color:#202124;transform:rotate(-90deg)">7</div>
<div class="abs" style="left:4px;top:474.64px;width:3px;height:1px;background:#9aa0a6"></div>
<div class="abs" style="left:3px;top:482.20px;width:5px;height:1px;background:#9aa0a6"></div>
<div class="abs" style="left:4px;top:489.76px;width:3px;height:1px;background:#9aa0a6"></div>
<div class="abs" style="left:-3.8px;top:492.82px;width:20px;height:10px;text-align:center;font-size:8.2px;line-height:10px;color:#202124;transform:rotate(-90deg)">8</div>
<div class="abs" style="left:4px;top:504.88px;width:3px;height:1px;background:#9aa0a6"></div>
<div class="abs" style="left:3px;top:512.44px;width:5px;height:1px;background:#9aa0a6"></div>
<div class="abs" style="left:4px;top:520.00px;width:3px;height:1px;background:#9aa0a6"></div>
<div class="abs" style="left:-3.8px;top:523.06px;width:20px;height:10px;text-align:center;font-size:8.2px;line-height:10px;color:#202124;transform:rotate(-90deg)">9</div>
<div class="abs" style="left:4px;top:535.12px;width:3px;height:1px;background:#9aa0a6"></div>
<div class="abs" style="left:3px;top:542.68px;width:5px;height:1px;background:#9aa0a6"></div>
<div class="abs" style="left:4px;top:550.24px;width:3px;height:1px;background:#9aa0a6"></div>
<div class="abs" style="left:-3.8px;top:553.30px;width:20px;height:10px;text-align:center;font-size:8.2px;line-height:10px;color:#202124;transform:rotate(-90deg)">10</div>
<div class="abs" style="left:4px;top:565.36px;width:3px;height:1px;background:#9aa0a6"></div>
<div class="abs" style="left:3px;top:572.92px;width:5px;height:1px;background:#9aa0a6"></div>
<div class="abs" style="left:4px;top:580.48px;width:3px;height:1px;background:#9aa0a6"></div>
<div class="abs" style="left:-3.8px;top:583.54px;width:20px;height:10px;text-align:center;font-size:8.2px;line-height:10px;color:#202124;transform:rotate(-90deg)">11</div>
<div class="abs" style="left:4px;top:595.60px;width:3px;height:1px;background:#9aa0a6"></div>
<div class="abs" style="left:3px;top:603.16px;width:5px;height:1px;background:#9aa0a6"></div>
<div class="abs" style="left:4px;top:610.72px;width:3px;height:1px;background:#9aa0a6"></div>
<div class="abs" style="left:-3.8px;top:613.78px;width:20px;height:10px;text-align:center;font-size:8.2px;line-height:10px;color:#202124;transform:rotate(-90deg)">12</div>
<div class="abs" style="left:4px;top:625.84px;width:3px;height:1px;background:#9aa0a6"></div>
<div class="abs" style="left:3px;top:633.40px;width:5px;height:1px;background:#9aa0a6"></div>
<div class="abs" style="left:4px;top:640.96px;width:3px;height:1px;background:#9aa0a6"></div>
<div class="abs" style="left:-3.8px;top:644.02px;width:20px;height:10px;text-align:center;font-size:8.2px;line-height:10px;color:#202124;transform:rotate(-90deg)">13</div>
<div class="abs" style="left:4px;top:656.08px;width:3px;height:1px;background:#9aa0a6"></div>
<div class="abs" style="left:3px;top:663.64px;width:5px;height:1px;background:#9aa0a6"></div>
<div class="abs" style="left:4px;top:671.20px;width:3px;height:1px;background:#9aa0a6"></div>
<div class="abs" style="left:-3.8px;top:674.26px;width:20px;height:10px;text-align:center;font-size:8.2px;line-height:10px;color:#202124;transform:rotate(-90deg)">14</div>
<div class="abs" style="left:4px;top:686.32px;width:3px;height:1px;background:#9aa0a6"></div>
<div class="abs" style="left:3px;top:693.88px;width:5px;height:1px;background:#9aa0a6"></div>
<div class="abs" style="left:4px;top:701.44px;width:3px;height:1px;background:#9aa0a6"></div>
<div class="abs" style="left:-3.8px;top:704.50px;width:20px;height:10px;text-align:center;font-size:8.2px;line-height:10px;color:#202124;transform:rotate(-90deg)">15</div>
<div class="abs" style="left:4px;top:716.56px;width:3px;height:1px;background:#9aa0a6"></div>
<div class="abs" style="left:3px;top:724.12px;width:5px;height:1px;background:#9aa0a6"></div>
<div class="abs" style="left:4px;top:731.68px;width:3px;height:1px;background:#9aa0a6"></div>
<div class="abs" style="left:-3.8px;top:734.74px;width:20px;height:10px;text-align:center;font-size:8.2px;line-height:10px;color:#202124;transform:rotate(-90deg)">16</div>
<svg style="left:27px;top:191px" width="13" height="13"><path d="M12.5 6.5H1.5M6.5 1.5L1.5 6.5L6.5 11.5" fill="none" stroke="#80868b" stroke-width="1.5"/></svg>
<div class="abs" style="left:30.7px;top:228px;width:200px;font-size:10.4px;line-height:13px;color:#5f6368">Tajuk yang Anda tambahkan ke<br>dokumen akan muncul di sini.</div>
<div class="abs" style="left:351px;top:179px;width:635px;height:559px;background:#fff;box-shadow:0 0 2px 0 rgba(60,64,67,.2)"></div>
<div class="abs" style="left:487px;top:271px;width:6px;height:27px;background:#bbd2f9"></div>
<div class="abs" style="left:428px;top:298px;width:44px;height:27px;background:#bbd2f9"></div>
<div style="position:absolute;left:428px;font-size:11.73px;line-height:14px;color:#000;white-space:nowrap;top:256px">dasdasdas asd asd asf dsakjf sdnakfnk sdankf kasjdknjf asdfnkj asdknfkn asdnkjf aksjdnkj</div>
<div style="position:absolute;left:428px;font-size:11.73px;line-height:14px;color:#000;white-space:nowrap;top:270.8px">fdsajkaj fsd</div>
<div style="position:absolute;left:428px;font-size:11.73px;line-height:14px;color:#000;white-space:nowrap;top:297.7px">asdasd</div>
<div style="position:absolute;left:428px;font-size:11.73px;line-height:14px;color:#000;white-space:nowrap;top:323.2px">dsadas</div>
<svg style="left:0;top:0" width="1" height="1"><path d="M428 285L429.5 283.8L431.0 285L432.5 283.8L434.0 285L435.5 283.8L437.0 285L438.5 283.8L440.0 285L441.5 283.8L443.0 285L444.5 283.8L446.0 285L447.5 283.8L449.0 285L450.5 283.8L452.0 285L453.5 283.8L455.0 285L456.5 283.8L458.0 285L459.5 283.8L461.0 285L462.5 283.8L464.0 285L465.5 283.8L467.0 285L468.5 283.8" fill="none" stroke="#d93025" stroke-width="0.8"/></svg>
<svg style="left:0;top:0" width="1" height="1"><path d="M813 270L814.5 268.8L816.0 270L817.5 268.8L819.0 270L820.5 268.8L822.0 270L823.5 268.8L825.0 270L826.5 268.8L828.0 270L829.5 268.8L831.0 270L832.5 268.8L834.0 270L835.5 268.8L837.0 270L838.5 268.8L840.0 270L841.5 268.8L843.0 270L844.5 268.8L846.0 270L847.5 268.8L849.0 270L850.5 268.8" fill="none" stroke="#d93025" stroke-width="0.8"/></svg>
<div class="abs" style="left:971px;top:253px;width:32px;height:75px;border-radius:16px;background:#fff;box-shadow:0 1px 3px rgba(60,64,67,.25)"></div>
<svg style="left:979.5px;top:266.5px" width="17" height="16"><path d="M1 15.5V1.9A0.9 0.9 0 0 1 1.9 1H15.1A0.9 0.9 0 0 1 16 1.9V11.1A0.9 0.9 0 0 1 15.1 12H3.5Z" fill="none" stroke="#1a73e8" stroke-width="1.6" stroke-linejoin="round"/><path d="M8.5 2.8V10.2M4.8 6.5H12.2" stroke="#1a73e8" stroke-width="1.8"/></svg>
<svg style="left:979.5px;top:298.5px" width="17" height="16"><path d="M1 15.5V1.9A0.9 0.9 0 0 1 1.9 1H15.1A0.9 0.9 0 0 1 16 1.9V11.1A0.9 0.9 0 0 1 15.1 12H3.5Z" fill="none" stroke="#1e8e3e" stroke-width="1.6" stroke-linejoin="round"/><path d="M3.8 9.8L4.2 7.6L8.8 3L10.8 5L6.2 9.5Z" fill="#1e8e3e"/><path d="M8.2 9.2H12.8" stroke="#1e8e3e" stroke-width="1.6"/></svg>
<div class="abs" style="left:1357px;top:171px;width:6px;height:347px;border-radius:3px;background:#dadce0"></div>
<div class="abs" style="left:1285px;top:702px;width:31px;height:31px;border-radius:3px;background:#fafafa;border:1px solid #dadce0"></div>
<svg style="left:1292.8px;top:709.5px" width="15.5" height="16.5"><path d="M1.2 0H14.3A1.2 1.2 0 0 1 15.5 1.2V12.4A1.2 1.2 0 0 1 14.3 13.6H10L7.75 16.5L5.5 13.6H1.2A1.2 1.2 0 0 1 0 12.4V1.2A1.2 1.2 0 0 1 1.2 0Z" fill="#6f7478"/><path d="M7.75 2.3Q8.3 6.2 12.3 6.8Q8.3 7.4 7.75 11.3Q7.2 7.4 3.2 6.8Q7.2 6.2 7.75 2.3Z" fill="#fff"/></svg>
<div class="abs" style="left:1346px;top:702px;width:28px;height:28px;border-radius:14px;background:#fff;box-shadow:0 1px 3px rgba(60,64,67,.3)"></div>
<svg style="left:1355px;top:712px" width="6" height="9"><path d="M5 0.8L1.3 4.5L5 8.2" fill="none" stroke="#5f6368" stroke-width="1.4"/></svg>
<div class="abs" style="left:0;top:738px;width:1366px;height:30px;background:linear-gradient(90deg,#d6e2e6 0%,#d3e0e4 40%,#d9e3dc 44%,#e1e7cf 47.5%,#dfe6d0 50%,#d5e1e0 53%,#d4e0e6 60%,#d3e0e6 100%)"></div>
<svg style="left:10px;top:745px" width="16" height="16"><path d="M0 2.3L6.2 1.4V7.6H0Z M7.2 1.2L16 0V7.6H7.2Z M0 8.6H6.2V14.6L0 13.7Z M7.2 8.6H16V16L7.2 14.8Z" fill="#000"/></svg>
<svg style="left:46px;top:745px" width="16" height="16"><circle cx="10.4" cy="5.3" r="4.6" fill="none" stroke="#000" stroke-width="1.2"/><path d="M7.2 8.6L0.9 14.9" stroke="#000" stroke-width="1.2"/></svg>
<svg style="left:82px;top:745px" width="16" height="16"><path d="M0.6 0V1.6H10.3V0M0.6 14.6V13.4H10.3V15" fill="none" stroke="#000" stroke-width="1.1"/><rect x="1.6" y="4.2" width="7.7" height="6.6" fill="none" stroke="#000" stroke-width="1.1"/><path d="M14.7 0V3.5M14.7 6.8V15" stroke="#000" stroke-width="1.1"/><rect x="13.7" y="4.3" width="2" height="2" fill="#000"/></svg>
<svg style="left:121px;top:746px" width="16" height="14"><path d="M0 0H6.5L7.7 1.2V2H0Z" fill="#e0a100"/><rect x="0" y="2" width="16" height="12" fill="#ffc83d"/><rect x="0" y="2" width="16" height="12" fill="url(#fg)"/><defs><linearGradient id="fg" x1="0" y1="0" x2="0" y2="1"><stop offset="0" stop-color="#ffd866"/><stop offset="1" stop-color="#fcb813"/></linearGradient></defs><path d="M3 14V7.2H13V14H10.4V9.4H5.6V14Z" fill="#2b87de"/></svg>
<div class="abs" style="left:148px;top:738px;width:36px;height:30px;background:rgba(255,255,255,.45)"></div>
<div class="abs" style="left:148px;top:766px;width:36px;height:2px;background:#b146c2"></div>
<svg style="left:159px;top:746px" width="14" height="14"><defs><clipPath id="cc"><circle cx="7" cy="7" r="7"/></clipPath></defs><g clip-path="url(#cc)"><path d="M7 7L-4.28 2.9L7 -5L16.19 -0.71Z" fill="#db4437"/><path d="M7 7L16.19 -0.71L18.28 11.1L9.08 18.82Z" fill="#f4c20d"/><path d="M7 7L9.08 18.82L-2.19 14.72L-4.28 2.9Z" fill="#0f9d58"/></g><path d="M7 7L1 -3.4" stroke="none"/><circle cx="7" cy="7" r="3.3" fill="#fff"/><circle cx="7" cy="7" r="2.6" fill="#4285f4"/></svg>
<svg style="left:1124px;top:749.5px" width="12.5" height="7"><path d="M0.5 6.5L6.25 0.8L12 6.5" fill="none" stroke="#000" stroke-width="1.1"/></svg>
<svg style="left:1149px;top:745px" width="11.5" height="16"><path d="M2.2 1.8Q5.2 -0.2 8.2 1.8M2.2 14.2Q5.2 16.2 8.2 14.2" fill="none" stroke="#000" stroke-width="1"/><rect x="0.6" y="4.7" width="7" height="6.6" rx="1.2" fill="none" stroke="#000" stroke-width="1.1"/><path d="M7.6 6.8L10.9 5V11L7.6 9.2" fill="none" stroke="#000" stroke-width="1.1"/></svg>
<svg style="left:1170px;top:747px" width="17" height="11"><path d="M1.2 0V2.6M3.5 0V2.6M0.2 2.6H4.5V5.2Q4.5 6.6 2.35 6.8Q0.2 6.6 0.2 5.2Z M2.35 6.8V10.5" fill="none" stroke="#000" stroke-width="1"/><rect x="5" y="2.2" width="10.4" height="7" fill="none" stroke="#000" stroke-width="1.1"/><rect x="6.4" y="3.6" width="7.6" height="4.2" fill="#000"/><rect x="15.4" y="4.4" width="1.3" height="2.6" fill="#000"/></svg>
<svg style="left:1196.5px;top:747.5px" width="13.5" height="13"><path d="M0.8 12.5A11.7 11.7 0 0 1 12.5 0.8M3.4 12.5A9.1 9.1 0 0 1 12.5 3.4M6 12.5A6.5 6.5 0 0 1 12.5 6" fill="none" stroke="#000" stroke-width="1"/><circle cx="10.9" cy="11" r="1.3" fill="#000"/></svg>
<svg style="left:1218px;top:746px" width="16" height="14"><path d="M0.6 4.5H3.2L7.2 0.8V13.2L3.2 9.5H0.6Z" fill="none" stroke="#000" stroke-width="1.1"/><path d="M9.3 5Q10.8 7 9.3 9" fill="none" stroke="#000" stroke-width="1.1"/><path d="M11.5 2.6Q14 7 11.5 11.4M13.5 0.8Q17.2 7 13.5 13.2" fill="none" stroke="#7a7f82" stroke-width="0.9"/></svg>
<div class="abs" style="left:1246.5px;top:745px;font-size:11.7px;line-height:14px;color:#000;white-space:nowrap">IND</div>
<div class="abs" style="left:1280.3px;top:745px;font-size:11.7px;line-height:14px;color:#000;white-space:nowrap;letter-spacing:-0.6px">00:35</div>
<svg style="left:1325px;top:745px" width="17" height="16"><path d="M0.6 0.6H15.9V12.5H10.3L8.25 15L6.2 12.5H0.6Z" fill="none" stroke="#000" stroke-width="1.1" stroke-linejoin="miter"/></svg>
<div class="abs" style="left:1361px;top:738px;width:1px;height:30px;background:#9aa5aa"></div>
</body></html>
